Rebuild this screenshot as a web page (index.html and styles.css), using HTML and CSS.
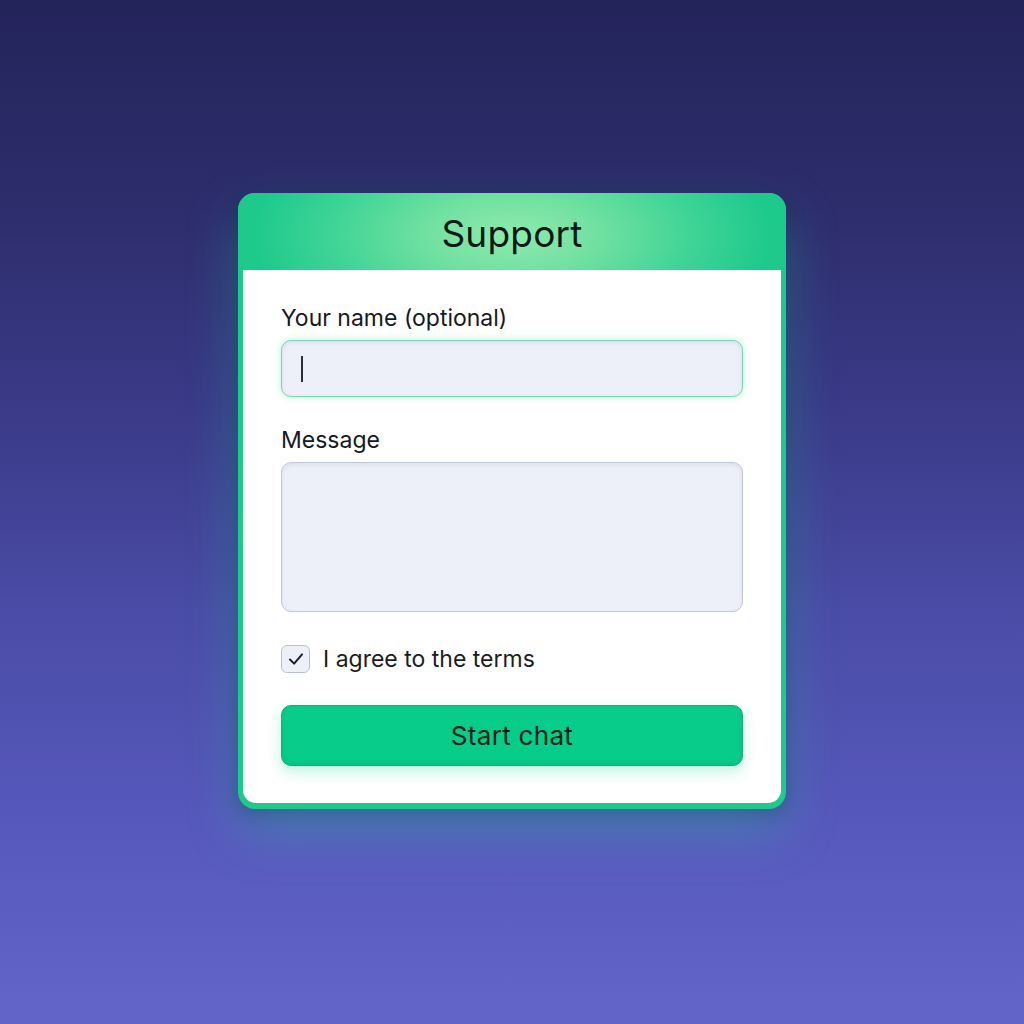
FILE: index.html
```html
<!DOCTYPE html>
<html>
<head>
<meta charset="utf-8">
<link rel="stylesheet" href="styles.css">
</head>
<body>
<div class="stage">
  <div class="card">
    <div class="card-head">Support</div>
    <div class="card-body">
      <label class="field-label">Your name (optional)</label>
      <div class="input focused"><span class="caret"></span></div>
      <label class="field-label msg">Message</label>
      <div class="textarea"></div>
      <div class="check-row">
        <span class="checkbox">
          <svg viewBox="0 0 20 20" width="22" height="22"><path d="M4.5 10.5 L8.3 14.2 L15.5 5.8" fill="none" stroke="#1a1d2e" stroke-width="1.8" stroke-linecap="round" stroke-linejoin="round"/></svg>
        </span>
        <span class="check-label">I agree to the terms</span>
      </div>
      <button class="btn">Start chat</button>
    </div>
  </div>
</div>
</body>
</html>
```
FILE: styles.css
```css
html, body {
  margin: 0;
  padding: 0;
  width: 1024px;
  height: 1024px;
  overflow: hidden;
}
body {
  background: linear-gradient(180deg, #23245a 0%, #2d2d6c 20%, #3a3a88 40%, #4a4ca6 60%, #5758bc 80%, #6365c9 100%);
  font-family: Inter, "Noto Sans", sans-serif;
}
.stage {
  display: flex;
  justify-content: center;
  padding-top: 193px;
}
.card {
  width: 548px;
  box-sizing: border-box;
  background: #1ec98c;
  border-radius: 17px;
  padding: 0 5px 6px 5px;
  box-shadow: 0 22px 50px rgba(40, 200, 160, 0.35), 0 6px 18px rgba(10, 20, 60, 0.35);
}
.card-head {
  height: 77px;
  display: flex;
  align-items: center;
  justify-content: center;
  padding-top: 3px;
  box-sizing: border-box;
  font-size: 37px;
  color: #0c1a14;
  letter-spacing: 0.2px;
  margin: 0 -5px;
  border-radius: 17px 17px 0 0;
  background: radial-gradient(ellipse 260px 120px at 50% 55%, #90eaae 0%, #6ee0a0 35%, #3ed496 70%, #1ec98c 100%);
}
.card-body {
  background: #ffffff;
  border-radius: 0 0 13px 13px;
  padding: 35px 38px 37px 38px;
  display: flex;
  flex-direction: column;
}
.field-label {
  font-size: 23px;
  color: #16181f;
  line-height: 26px;
  margin-bottom: 9px;
}
.field-label.msg {
  margin-top: 30px;
}
.input, .textarea {
  box-sizing: border-box;
  background: #edf0f9;
  border: 1.5px solid #c3c8da;
  border-radius: 10px;
  box-shadow: inset 0 2px 4px rgba(120, 130, 170, 0.15);
}
.input {
  height: 57px;
  display: flex;
  align-items: center;
  padding-left: 19px;
}
.input.focused {
  border-color: #7fd3b4;
  box-shadow: 0 0 7px rgba(60, 220, 170, 0.4), inset 0 2px 4px rgba(120, 130, 170, 0.15);
}
.caret {
  width: 2px;
  height: 26px;
  background: #2a2d3a;
}
.textarea {
  height: 150px;
}
.check-row {
  margin-top: 33px;
  display: flex;
  align-items: center;
  gap: 13px;
}
.checkbox {
  width: 29px;
  height: 28px;
  box-sizing: border-box;
  border: 1.5px solid #b9bfd3;
  border-radius: 6px;
  background: #eef0f8;
  display: flex;
  align-items: center;
  justify-content: center;
}
.check-label {
  font-size: 23px;
  color: #1a1c24;
}
.btn {
  margin-top: 32px;
  height: 61px;
  border: 1.5px solid #22a877;
  border-radius: 10px;
  background: #08cc8a;
  color: #0b2219;
  font-family: Inter, "Noto Sans", sans-serif;
  font-size: 26px;
  letter-spacing: 0.3px;
  box-shadow: 0 6px 14px rgba(40, 220, 160, 0.3), inset 0 -2px 4px rgba(0, 90, 60, 0.12);
  padding: 0;
}
```
